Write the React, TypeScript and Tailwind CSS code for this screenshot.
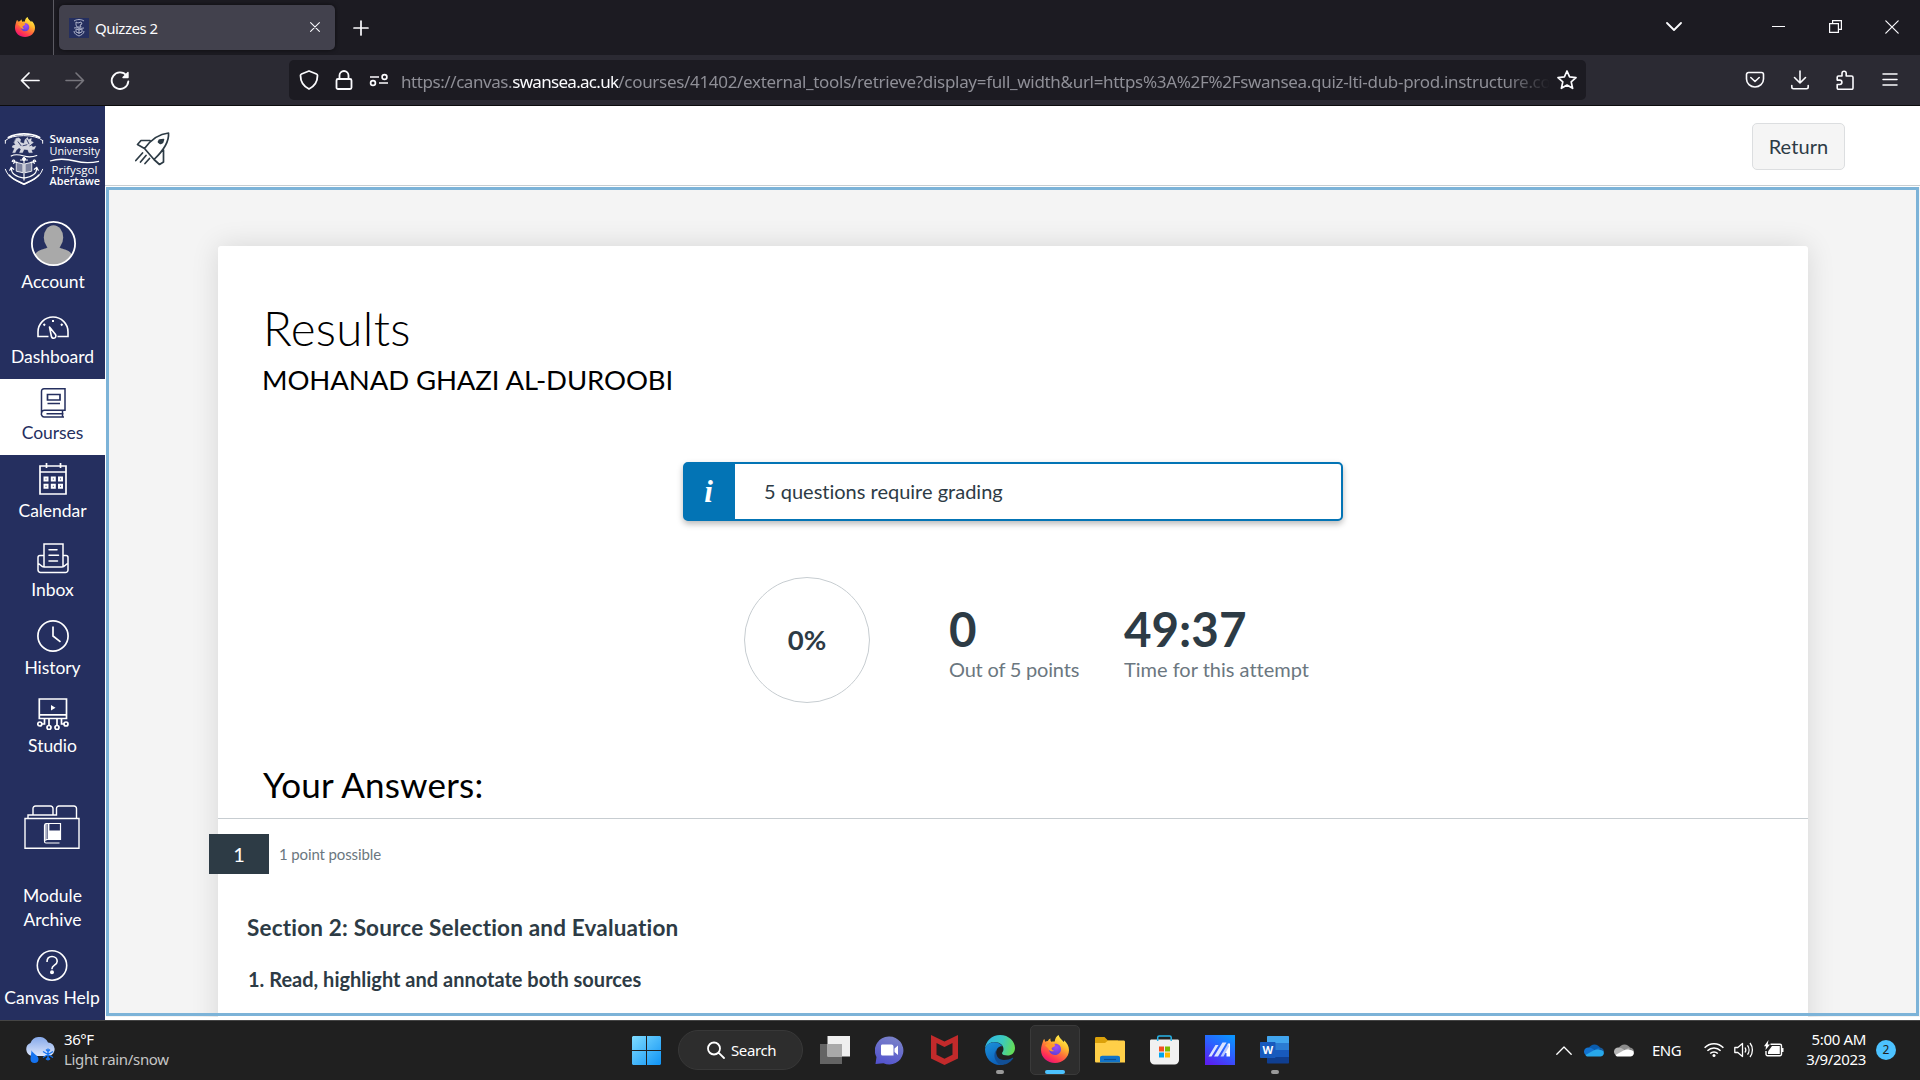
import React from "react";

const UI = "font-['Noto_Sans',sans-serif]";

function Firefox({ id, className }: { id: string; className: string }) {
  return (
    <svg viewBox="0 0 28 28" className={className}>
      <defs>
        <linearGradient id={id + "a"} x1="0.8" y1="0.05" x2="0.25" y2="1">
          <stop offset="0" stopColor="#fff44f" />
          <stop offset="0.3" stopColor="#ffbd2e" />
          <stop offset="0.55" stopColor="#ff7139" />
          <stop offset="0.8" stopColor="#ff3055" />
          <stop offset="1" stopColor="#e3107c" />
        </linearGradient>
        <radialGradient id={id + "b"} cx="0.6" cy="0.3" r="0.75">
          <stop offset="0" stopColor="#a04df5" />
          <stop offset="1" stopColor="#5b3fd6" />
        </radialGradient>
      </defs>
      <path
        d="M17.6 0c.6 3 3.400 4.600 5 7 .5-.3.600-1 .6-1.800C26 8 28 11 28 15c0 7.400-6.200 13-14 13S0 22.400 0 15c0-3.600 1.400-6.700 2.200-9.600.3-.7.8-1.200 1.200-1.300l.8 2.700C5 6.200 5.900 6 6.900 6c.7-1.300 1.700-2 2.600-2.400-.3 1.200 0 2.400.8 3.200 1.200-.4 2.300-.5 3.400-.3C13.900 3.600 15.600 1.200 17.600 0z"
        fill={`url(#${id}a)`}
      />
      <path d="M13.500 8.800c4-.6 6.500 2 6.500 5.400 0 3.200-2.600 5.800-6 5.800-3.500 0-5.800-2.500-5.800-5.200 0-1 .3-1.800.7-2.300 1 .5 2.300.3 3.400-.5l1.700-1.100c-.2-.8-.5-1.400-.5-2.100z" fill={`url(#${id}b)`} />
      <path d="M4 10.500c2-2.300 5-2.200 7.500-.9 1 .5 2 .5 2.900.5-.3 1.400-2.900 1.600-3.600 2.800-.5 1.100.3 2.600 2.500 2.800-2.200 1.500-5.300.2-6-2.200-.8-.9-2-2-3.300-3z" fill="#ff9a2b" />
    </svg>
  );
}

function Line({ d, className, w = 1.6, box = "0 0 20 20", fill = "none" }: { d: string; className: string; w?: number; box?: string; fill?: string }) {
  return (
    <svg viewBox={box} className={className} fill={fill} stroke="currentColor" strokeWidth={w} strokeLinecap="round" strokeLinejoin="round">
      <path d={d} />
    </svg>
  );
}

function Crest({ className }: { className: string }) {
  return (
    <svg viewBox="0 0 40 55" className={className} fill="none" stroke="#fff" strokeLinecap="round">
      <path d="M1.300 8.500C7 2 32 2 38.700 8.500" strokeWidth="1" />
      <path d="M4 5.500C13 .8 27 .8 36 5.500" strokeWidth="1.700" />
      <path d="M1 8.500v3M39 8.500v3M1 38c3 9 12 12 19 15.500C27 50 36 47 39 38" strokeWidth="1" />
      <path d="M5 44c4 4.500 10 6.500 15 9 5-2.500 11-4.500 15-9" strokeWidth="1.700" />
      <path d="M7 24.500c4-2.500 8-1.500 13 0s9 1 13-.5" strokeWidth="1.200" />
      <path d="M12 6.500l2.500-.5 2 1.500-.5 3 4 1.500 1-4 2.500-2.500 1 2.500 3-1.500-.5 3 2.500 1-2.500 2.500 2 2.500 3-1-1.500 3-3 .5 1 3h-3.500l-1-3-4-.5-1.500 3.500h-3l1.500-3.500-2-1.500-3 2.500-1 2.500H8.500l2-4.500-2.500-1 .5-1.500 3-1-1.500-2z" fill="#fff" fillOpacity="0.800" strokeWidth="0.400" />
      <path d="M14 10l3 4M23 8l2 4M19 14l4-1M26 14l2-1" stroke="#252f5f" strokeWidth="0.900" />
      <path d="M20 26v23M16.500 28.500h7M8 30l5 1M32 30l-5 1M7 37c0 6 6 9 13 10 7-1 13-4 13-10M5.500 39L7 36l2.500 2M34.500 39L33 36l-2.500 2M8 30c1-3 4-1 1.500 2M32 30c-1-3-4-1-1.500 2" strokeWidth="1.200" />
      <path d="M12.500 31l6.500 1.500v9L12.500 40zM27.500 31L21 32.500v9l6.500-1.500z" fill="#fff" fillOpacity="0.400" strokeWidth="0.900" />
      <circle cx="20" cy="27.500" r="1.500" fill="#fff" />
    </svg>
  );
}

const icons = {
  dashboard: (
    <svg viewBox="0 0 32 32" className="h-8 w-8" fill="none" stroke="currentColor" strokeWidth="1.600">
      <path d="M11.500 24.500H1V20a15 15 0 0 1 30 0v4.500H20.500" />
      <path d="M12.500 15l6 7.500c1 1.700 0 3.700-1.700 3.700-1.300 0-2.200-.7-2.500-2.200z" strokeLinejoin="round" />
      <path d="M16 8v2M6.500 12l1.500 1.500M25.500 12L24 13.500" strokeWidth="2" />
    </svg>
  ),
  courses: (
    <svg viewBox="0 0 32 32" className="h-8 w-8" fill="none" stroke="currentColor" strokeWidth="1.700">
      <path d="M7 1.800h21v21.500H7.500a3 3 0 0 0-3 3V4.500c0-1.700 1-2.700 2.500-2.700zM4.500 26a3 3 0 0 0 3 4H27M9.500 26.700h17M25.500 23.500v6" strokeWidth="1.500" />
      <path d="M10.500 7.500H23v5.500H10.500zM10.500 16.500H23" />
    </svg>
  ),
  calendar: (
    <svg viewBox="0 0 32 32" className="h-8 w-8" fill="none" stroke="currentColor" strokeWidth="1.700">
      <path d="M3 3h26v28H3zM3 9h26M9.500 0v5M23.500 0v5" />
      <path d="M7.500 14.500h3v3h-3zM14.800 14.500h3v3h-3zM22 14.500h3v3h-3zM7.500 21.800h3v3h-3zM14.800 21.800h3v3h-3zM22 21.800h3v3h-3z" strokeWidth="2" />
    </svg>
  ),
  inbox: (
    <svg viewBox="0 0 32 32" className="h-8 w-8" fill="none" stroke="currentColor" strokeWidth="1.500">
      <path d="M7 25V2h19v23M7 13.500H3a2 2 0 0 0-2 2V28a2.500 2.500 0 0 0 2.500 2.500h25A2.500 2.500 0 0 0 31 28V15.500a2 2 0 0 0-2-2h-3M1 21.500c2 0 3 3.500 6 3.500h18c3 0 4-3.500 6-3.500" />
      <path d="M12 7.700h8M12 13.300h9.500M12 19h8.500" strokeLinecap="round" />
    </svg>
  ),
  history: (
    <svg viewBox="0 0 32 32" className="h-8 w-8" fill="none" stroke="currentColor" strokeWidth="1.700">
      <circle cx="16" cy="16" r="15.100" />
      <path d="M16 6.500V16l7.500 5.800" />
    </svg>
  ),
  studio: (
    <svg viewBox="0 0 32 32" className="h-8 w-8" fill="none" stroke="currentColor" strokeWidth="1.700">
      <path d="M2.300 1h27.200v19.500H2.300zM2.300 16.800h27.200" />
      <path d="M14 7l4.500 2.700L14 12.500z" fill="currentColor" stroke="none" />
      <path d="M7.500 20.500V26H5M24.500 20.500V26H27M12 20.500V28M20 20.500V28" />
      <circle cx="2.800" cy="26" r="2" /><circle cx="29" cy="26" r="2" /><circle cx="12" cy="29.500" r="2" /><circle cx="20" cy="29.500" r="2" />
    </svg>
  ),
};

function NavItem({ icon, label, className }: { icon: React.ReactNode; label: string; className: string }) {
  return (
    <a className={"flex shrink-0 flex-col items-center " + className}>
      {icon}
      <span className="h-[22px] whitespace-nowrap text-[17.5px] leading-[22px] tracking-[-0.05px]">{label}</span>
    </a>
  );
}

function Sidebar() {
  return (
    <nav className="flex w-[105px] shrink-0 flex-col bg-[#252f5f] text-white">
      <div className="flex h-[115px] shrink-0 pt-[26px] pl-1">
        <Crest className="h-[54px] w-10" />
        <svg viewBox="0 0 58 55" className="h-[55px] w-[58px] overflow-visible font-['Open_Sans',sans-serif]" fill="#fff" fontSize="11.500">
          <text x="5.500" y="11" fontWeight="600" textLength="49.500" lengthAdjust="spacingAndGlyphs">Swansea</text>
          <text x="5.500" y="23" textLength="50.500" lengthAdjust="spacingAndGlyphs">University</text>
          <path d="M6 29c8-2.500 17-2 25 0s16 2 24 .3" stroke="#fff" strokeWidth="1.300" fill="none" />
          <text x="7.500" y="41.500" textLength="46" lengthAdjust="spacingAndGlyphs">Prifysgol</text>
          <text x="5.500" y="52.500" fontWeight="600" textLength="50.500" lengthAdjust="spacingAndGlyphs">Abertawe</text>
        </svg>
      </div>
      <NavItem
        className="h-[82px] gap-[5px] pl-px"
        label="Account"
        icon={
          <svg viewBox="0 0 45 45" className="h-[45px] w-[45px]">
            <defs><clipPath id="av"><circle cx="22.500" cy="22.500" r="21.500" /></clipPath></defs>
            <g clipPath="url(#av)" fill="#a9a9a9">
              <ellipse cx="22.500" cy="16.500" rx="9.700" ry="12.300" />
              <path d="M17 25h11c0 4 12 2 13 10v10H4V35c1-8 13-6 13-10z" />
            </g>
            <circle cx="22.500" cy="22.500" r="21.600" fill="none" stroke="#fff" strokeWidth="1.800" />
          </svg>
        }
      />
      <NavItem className="h-[76px] gap-[2px] pt-[9px]" icon={icons.dashboard} label="Dashboard" />
      <NavItem className="h-[76px] gap-[3px] bg-white pt-[8px] text-[#252f5f]" icon={icons.courses} label="Courses" />
      <NavItem className="h-[79px] gap-[5px] pt-[8px]" icon={icons.calendar} label="Calendar" />
      <NavItem className="h-[78px] gap-[5px] pt-[8px]" icon={icons.inbox} label="Inbox" />
      <NavItem className="h-[78px] gap-[5px] pt-[8px]" icon={icons.history} label="History" />
      <NavItem className="h-[78px] gap-[5px] pt-[8px]" icon={icons.studio} label="Studio" />
      <a className="flex h-[182px] shrink-0 flex-col items-center pt-[37px]">
        <svg viewBox="0 0 56 44" className="mr-[2px] h-11 w-14" fill="none" stroke="#fff" strokeWidth="1.400">
          <path d="M1 13.500h54V43.300H1zM4 13V10h5V3.500a2.500 2.500 0 0 1 2.500-2.500h15A2.500 2.500 0 0 1 29 3.500V10h3.500V3.500A2.500 2.500 0 0 1 35 1h15a2.500 2.500 0 0 1 2.500 2.500V13M9 10h24" />
          <path d="M22 18.500h14.500v16H22zM20.500 36V20.500c0-1 .5-2 1.500-2v16.500c-1.500 0-1.500.6-1.500 1.500s.5 1.500 1.500 1.500h13.500" strokeWidth="1.200" />
          <path d="M25 26h11v8H25z" fill="#fff" strokeWidth="1" /><path d="M24.500 19v15" strokeWidth="1.800" />
        </svg>
        <span className="mt-[35px] text-center text-[17.5px] leading-6">Module<br />Archive</span>
      </a>
      <NavItem
        className="h-[70px] gap-[5px] pr-px"
        label="Canvas Help"
        icon={
          <svg viewBox="0 0 32 32" className="h-8 w-8" fill="none" stroke="currentColor" strokeWidth="1.600">
            <circle cx="16" cy="15.500" r="14.700" />
            <path d="M11 12c0-3.500 2-5.500 5-5.500s5.200 2 5.200 4.700c0 4-5.200 3.800-5.200 7.300v.8" />
            <circle cx="16" cy="22.300" r="1.200" fill="currentColor" />
          </svg>
        }
      />
    </nav>
  );
}

function BrowserChrome() {
  return (
    <header className={"shrink-0 text-[#fbfbfe] " + UI}>
      <div className="flex h-[55px] bg-[#1c1b22]">
        <div className="flex w-[54px] items-center justify-center border-r border-[#5b5a62] pr-[3px] pb-px">
          <Firefox id="f1" className="h-5 w-5" />
        </div>
        <div className="mt-[5px] ml-[5px] flex h-[45px] w-[276px] items-center rounded-[5px] bg-[#42414d] pr-[15px] pl-[10px] shadow-[0_0_4px_rgba(0,0,0,.6)]">
          <svg viewBox="0 0 20 20" className="h-5 w-5">
            <path d="M0 0h20v20H0z" fill="#252f5f" />
            <path d="M5 3c3-2 7-2 10 0M7 4l2 1 3-1 1 2-2 1 1 2H8L7 7zM5 10c3-1 6 1 10 0M7 11l3 1 3-1v3l-3 1-3-1zM5 13c0 3 3 4 5 5 2-1 5-2 5-5M10 10v6" fill="none" stroke="#b9bdd2" strokeWidth="0.900" />
          </svg>
          <span className="ml-[6px] flex-1 text-[15px] leading-5 tracking-[-0.5px]">Quizzes 2</span>
          <Line className="mb-px h-[10px] w-[10px]" box="0 0 10 10" w={1.100} d="M.6.6l8.800 8.800M9.400.6L.6 9.400" />
        </div>
        <Line className="mt-[20px] ml-[18px] h-4 w-4" box="0 0 16 16" w={1.700} d="M8 1v14M1 8h14" />
        <div className="flex flex-1 justify-end pt-[20px] pr-[21px]">
          <Line className="mt-[2px] h-[9px] w-4" box="0 0 16 9" w={1.800} d="M1 1l7 7 7-7" />
          <Line className="ml-[90px] h-[13px] w-[13px]" box="0 0 13 13" w={1.200} d="M.5 6.500h12" />
          <svg viewBox="0 0 13 13" className="ml-[44px] h-[13px] w-[13px]" fill="none" stroke="currentColor" strokeWidth="1.200">
            <path d="M.6 3.600h8.800v8.800H.6zM3.600 3.600v-3h8.800v8.800h-3" />
          </svg>
          <Line className="ml-[43px] h-[14px] w-[14px]" box="0 0 14 14" w={1.200} d="M.8.8l12.400 12.400M13.200.8L.8 13.200" />
        </div>
      </div>
      <div className="flex h-[51px] items-center border-b border-[#0c0c0d] bg-[#2b2a33]">
        <Line className="ml-[20px] h-5 w-5" w={1.700} d="M19 10.500H1.500M9 3L1.500 10.500 9 18" />
        <Line className="ml-[25px] h-5 w-5 text-[#77767d]" w={1.600} d="M1 10.500h17.500M11 3l7.500 7.500L11 18" />
        <svg viewBox="0 0 20 20" className="ml-[25px] h-5 w-5" fill="none" stroke="currentColor" strokeWidth="1.900" strokeLinecap="round">
          <path d="M16.500 5.500A8.300 8.300 0 1 0 18.300 11.500" />
          <path d="M18 2.500v5h-5z" fill="currentColor" strokeWidth="1.400" strokeLinejoin="round" />
        </svg>
        <div className="ml-[159px] flex h-10 w-[1297px] items-center rounded-[5px] bg-[#1c1b22] pr-[9px] pl-[10px]">
          <Line className="h-5 w-5" w={1.800} d="M10 1l7.500 3c.8.300 1 .7 1 1.500 0 6-2.500 10.500-8.500 13.500-6-3-8.500-7.500-8.500-13.500 0-.8.200-1.200 1-1.500z" />
          <Line className="ml-[15px] h-5 w-5" w={1.800} d="M4 9h12a1.500 1.500 0 0 1 1.500 1.500v7A1.500 1.500 0 0 1 16 19H4a1.500 1.500 0 0 1-1.500-1.500v-7A1.500 1.500 0 0 1 4 9zM5.500 9V5.500a4.500 4.500 0 0 1 9 0V9" />
          <svg viewBox="0 0 20 20" className="ml-[15px] h-5 w-5" fill="none" stroke="currentColor" strokeWidth="1.700">
            <path d="M1 7h9M10 13h9" /><circle cx="15.500" cy="7" r="2.400" /><circle cx="4" cy="13" r="2.400" />
          </svg>
          <div className="mt-[3px] ml-[12px] w-[1149px] overflow-hidden whitespace-nowrap text-[17px] leading-6 tracking-[-0.31px] text-[#8f8f97] [mask-image:linear-gradient(to_right,black_96%,transparent)]">
            <span className="tracking-[-0.43px]">https://canvas.</span>
            <span className="tracking-[-0.7px] text-[#fbfbfe]">swansea.ac.uk</span>/courses/41402/external_tools/retrieve?display=full_width&amp;url=https%3A%2F%2Fswansea.quiz-lti-dub-prod.instructure.co
          </div>
          <Line className="ml-auto h-5 w-5" w={1.700} d="M10 1l2.600 5.900 6.400.7-4.800 4.300 1.400 6.400L10 15l-5.600 3.300 1.400-6.400L1 7.600l6.400-.7z" />
        </div>
        <div className="flex flex-1 justify-end gap-[25px] pr-[20px]">
          <Line className="h-5 w-5" w={1.600} d="M3.500 2.500h13A2 2 0 0 1 18.500 4.500V9a8.500 8 0 0 1-17 0V4.500a2 2 0 0 1 2-2zM5.800 7.500L10 11.500l4.200-4" />
          <Line className="h-5 w-5" w={1.600} d="M10 1v12M4.500 7.500L10 13l5.500-5.500M1.800 15.500v1.500c0 1 .7 1.700 1.700 1.700h13c1 0 1.700-.7 1.700-1.700v-1.500" />
          <Line className="h-5 w-5" w={1.600} d="M3.500 6H7V3.300a2 2 0 0 1 4.200 0V6h5.300a1.500 1.500 0 0 1 1.500 1.500V18a1.300 1.300 0 0 1-1.300 1.300H3.500A1.300 1.300 0 0 1 2.200 18v-3.500h2.500a2.200 2.200 0 0 0 0-4.400H2.200V7.300A1.300 1.300 0 0 1 3.500 6z" />
          <Line className="h-5 w-5" w={1.500} d="M3 4h14M3 9.500h14M3 15h14" />
        </div>
      </div>
    </header>
  );
}

function Results() {
  return (
    <div className="relative flex-1 overflow-hidden border-b-[3px] border-l border-white bg-[#f4f4f4] pt-[59px] pl-[112px] text-[#2d3b45] [font-variant-ligatures:none]">
      <div className="h-[800px] w-[1590px] rounded-t-[3px] bg-white pt-[53px] shadow-[0_0_28px_rgba(0,0,0,.12)]">
        <h1 className="ml-[45px] text-[47.5px] leading-[57px] font-light tracking-[0.35px] text-black">Results</h1>
        <h2 className="mt-[7px] ml-[44px] text-[27.5px] leading-[33px] tracking-[-0.1px] text-black">MOHANAD GHAZI AL-DUROOBI</h2>
        <div className="mx-auto mt-[66px] flex h-[59px] w-[660px] rounded-[5px] border-2 border-[#0374b5] bg-white shadow-[0_3px_6px_rgba(0,0,0,.28)]">
          <div className="flex w-[50px] items-center justify-center bg-[#0374b5] pr-[3px] font-['Liberation_Serif',serif] text-[31px] leading-none font-bold text-white italic">i</div>
          <p className="pt-[15px] pl-[29px] text-[20px] leading-6">5 questions require grading</p>
        </div>
        <div className="mt-[56px] flex pl-[526px]">
          <div className="flex h-[126px] w-[126px] items-center justify-center rounded-full border border-[#c7cdd1] pb-px text-[27.5px] font-bold">0%</div>
          <div className="ml-[79px] w-[176px] pt-[23px]">
            <div className="text-[47.5px] leading-[57px] font-bold">0</div>
            <div className="text-[20px] leading-6 tracking-[-0.2px] text-[#6b7780]">Out of 5 points</div>
          </div>
          <div className="pt-[23px]">
            <div className="-ml-px text-[47.5px] leading-[57px] font-bold">49:37</div>
            <div className="-ml-px text-[20px] leading-6 text-[#6b7780]">Time for this attempt</div>
          </div>
        </div>
        <h2 className="mt-[60px] h-[56px] border-b border-[#c7cdd1] pl-[45px] text-[35px] leading-[42px] tracking-[0.2px] text-black">Your Answers:</h2>
        <div className="mt-[15px] -ml-[9px] flex h-10 items-center">
          <div className="flex h-10 w-[60px] items-center justify-center bg-[#2d3b45] text-[20px] text-white">1</div>
          <span className="ml-[10px] text-[15px] tracking-[-0.12px] text-[#6b7780]">1 point possible</span>
        </div>
        <h3 className="mt-[40px] ml-[29px] text-[22.5px] leading-[27px] font-bold tracking-[0.18px]">Section 2: Source Selection and Evaluation</h3>
        <p className="mt-[26px] ml-[30px] text-[20px] leading-6 font-bold">1. Read, highlight and annotate both sources</p>
      </div>
      <div className="pointer-events-none absolute top-0 right-px bottom-px left-0 border-[3px] border-[#7cb3d8]" />
    </div>
  );
}

function Cell({ children, dot }: { children: React.ReactNode; dot?: boolean }) {
  return (
    <div className="relative flex h-[60px] w-[55px] shrink-0 items-center justify-center">
      {children}
      {dot && <span className="absolute bottom-[6px] left-[24px] h-1 w-2 rounded-full bg-[#9a9a9a]" />}
    </div>
  );
}

function Cloud({ a, b, c }: { a: string; b: string; c: string }) {
  return (
    <svg viewBox="0 0 20 14" className="h-[14px] w-5">
      <path d="M5 5a6 6 0 0 1 11 0l-4 4z" fill={a} />
      <path d="M4 13a4.200 4.200 0 0 1 .5-8.500c1.500-.2 3 .3 4.500 1.500l5 4z" fill={b} />
      <path d="M9 8l5-3a4.200 4.200 0 0 1 6 4l-4 2z" fill={b} opacity="0.700" />
      <path d="M1.500 12l8-4.500c3-1.500 6-1.500 9.500.5a3.300 3.300 0 0 1-2.500 5.500H4c-1 0-2-.5-2.500-1.500z" fill={c} />
    </svg>
  );
}

function Taskbar() {
  return (
    <footer className={"flex h-[60px] shrink-0 items-center bg-[#202020] text-white shadow-[inset_0_1px_0_#454545] " + UI}>
      <div className="flex w-[619px] items-center pl-[25px]">
        <svg viewBox="0 0 30 26" className="h-[26px] w-[30px]">
          <defs><linearGradient id="wc" x1="0" y1="0" x2="0" y2="1"><stop offset="0" stopColor="#86a9ea" /><stop offset="1" stopColor="#dbe5fb" /></linearGradient></defs>
          <path d="M7 19a6.800 6.800 0 0 1-1.500-13A9.500 9.500 0 0 1 23 5.500 6.800 6.800 0 0 1 24 19z" fill="url(#wc)" />
          <path d="M6.500 13c0 3 7 5 7 9a4 4 0 0 1-8 0c0-3 1-6 1-9z" fill="#1573f0" />
          <path d="M23 11.500v12M18 14.500l10 6M28 14.500l-10 6M21 12.500l2 2 2-2M21 22.500l2-2 2 2" stroke="#1573f0" strokeWidth="1.300" fill="none" />
        </svg>
        <div className="mb-[2px] ml-[9px] text-[15px] leading-5">
          <div className="tracking-[-0.45px]">36°F</div>
          <div className="tracking-[-0.32px] text-[#c6c6c6]">Light rain/snow</div>
        </div>
      </div>
      <Cell>
        <svg viewBox="0 0 29 29" className="h-[29px] w-[29px]">
          <defs><linearGradient id="wi" x1="0" y1="0" x2="1" y2="1"><stop offset="0" stopColor="#7fdcff" /><stop offset="1" stopColor="#0f93f5" /></linearGradient></defs>
          <path d="M1 0h13v14H0V1zM15 0h13l1 1v13H15zM0 15h14v14H1l-1-1zM15 15h14v13l-1 1H15z" fill="url(#wi)" />
        </svg>
      </Cell>
      <div className="mx-1 flex h-10 w-[125px] shrink-0 items-center rounded-full border border-[#383838] bg-[#2d2d2d] pl-[28px]">
        <Line className="h-[18px] w-[18px]" box="0 0 18 18" w={1.800} d="M13 7.500a6 6 0 1 1-12 0 6 6 0 0 1 12 0zM11.800 11.800L17 17" />
        <span className="ml-[6px] text-[15px] leading-5 tracking-[-0.4px]">Search</span>
      </div>
      <Cell>
        <svg viewBox="0 0 30 28" className="h-7 w-[30px]">
          <path d="M0 8h22v20H0z" fill="#646464" /><path d="M7.500 0H30v20.500H7.500z" fill="#efefef" /><path d="M7.500 8H22v12.500H7.500z" fill="#a9a9a9" />
        </svg>
      </Cell>
      <Cell>
        <svg viewBox="0 0 29 29" className="h-[29px] w-[29px]">
          <defs><linearGradient id="ch" x1="0.700" y1="0" x2="0.300" y2="1"><stop offset="0" stopColor="#7b83c9" /><stop offset="1" stopColor="#5353ce" /></linearGradient></defs>
          <path d="M14.500.500a14 14 0 1 1-6 26.700L.5 28l1-7A14 14 0 0 1 14.500.5z" fill="url(#ch)" />
          <path d="M7.500 8.500h9a2 2 0 0 1 2 2v9h-11a1.500 1.500 0 0 1-1.500-1.500v-8c0-1 .5-1.500 1.500-1.500zM19.500 12.500l3.500-3v9.500l-3.500-3z" fill="#fff" />
        </svg>
      </Cell>
      <Cell>
        <svg viewBox="0 0 27 30" className="h-[30px] w-[27px]"><path d="M0 0l13.500 6.500L27 0v23.500L13.500 30 0 23.500zM5.500 8v11.700l8 4 8-4V8l-8 4z" fill="#c22a2b" fillRule="evenodd" /></svg>
      </Cell>
      <Cell dot>
        <svg viewBox="0 0 30 30" className="h-[30px] w-[30px]">
          <defs>
            <linearGradient id="e1" x1="0" y1="0.300" x2="1" y2="0.500"><stop offset="0" stopColor="#2fb6e6" /><stop offset="0.550" stopColor="#3bc9c0" /><stop offset="1" stopColor="#65dd55" /></linearGradient>
            <linearGradient id="e2" x1="0" y1="0" x2="0.500" y2="1"><stop offset="0" stopColor="#1b93dc" /><stop offset="1" stopColor="#0c5fb8" /></linearGradient>
          </defs>
          <path d="M0 14C.5 6 7 0 15 0c9 0 15 6.500 15 13 0 5-3.500 7.500-7.500 7.500-3 0-5.500-1-5.500-2.300 0-.8 1.500-1.500 1.500-4.200 0-4-4-7-9-7C5 7 1 10 0 14z" fill="url(#e1)" />
          <path d="M0 14c1-4 5-6.700 9.500-6.700 4 0 6.500 1.700 7.800 4-2.500-.8-6.300 2-6.300 6.700 0 6 5 10.500 10 10-2 1.300-4 2-6 2C6.500 30 0 23 0 14z" fill="url(#e2)" />
          <path d="M11.500 14.500C10 21 14 25 19 25c3.500 0 6-1 8.500-2.300.5-.2 1 .3.600.8C25 28 20.500 30 15.500 30 9.500 27 7.500 19.500 11.500 14.500z" fill="#124f95" />
        </svg>
      </Cell>
      <div className="relative mx-[2.500px] flex h-[50px] w-[50px] shrink-0 items-center justify-center rounded-[5px] border border-[#3a3a3a] bg-[#2d2d2d]">
        <Firefox id="f2" className="mb-[2px] h-7 w-7" />
        <span className="absolute bottom-0 left-[14px] h-1 w-5 rounded-full bg-[#4cc2ff]" />
      </div>
      <Cell>
        <svg viewBox="0 0 30 27" className="h-[27px] w-[30px]">
          <path d="M0 1.500C0 .5.500 0 1.500 0h8L13 3.500h10V9H0z" fill="#dba10a" />
          <path d="M0 6h10l3-2.500h15.500c1 0 1.500.5 1.500 1.500v20.500H1.500C.5 25.500 0 25 0 24z" fill="#ffcf48" />
          <path d="M5 25.500V21c0-1.500.8-2.300 2.300-2.300h15.400c1.500 0 2.300.8 2.300 2.300v4.500z" fill="#1274c8" /><path d="M9 22.500h12" stroke="#0b4f92" strokeWidth="1.200" />
        </svg>
      </Cell>
      <Cell>
        <svg viewBox="0 0 29 30" className="h-[30px] w-[29px]">
          <path d="M0 6c0-1 .5-1.500 1.500-1.500h26c1 0 1.500.5 1.500 1.500v19a4.500 4.500 0 0 1-4.500 4.500h-20A4.500 4.500 0 0 1 0 25z" fill="#f1f1f1" />
          <path d="M7.700 6V2.500c0-1 .5-1.500 1.500-1.500h10.500c1 0 1.500.5 1.500 1.500V6" fill="none" stroke="#27b4e8" strokeWidth="1.500" />
          <path d="M9 11.500h5v5H9z" fill="#f25022" /><path d="M15 11.500h5v5h-5z" fill="#7fba00" /><path d="M9 17.500h5v5H9z" fill="#00a4ef" /><path d="M15 17.500h5v5h-5z" fill="#ffb900" />
        </svg>
      </Cell>
      <Cell>
        <svg viewBox="0 0 30 30" className="h-[30px] w-[30px]">
          <defs><linearGradient id="my" x1="0.800" y1="0" x2="0.200" y2="1"><stop offset="0" stopColor="#0c93ff" /><stop offset="0.500" stopColor="#2f5cff" /><stop offset="1" stopColor="#5a1ff0" /></linearGradient></defs>
          <path d="M0 0h30v30H0z" fill="url(#my)" />
          <path d="M3.500 21.500L10.500 10h3l-7 11.500zM9 21.500L17.500 7.500h4L13 21.500z" fill="#dbe3ff" />
          <path d="M23 8.500h2v13h-3.500V18h-3l2-3.500h1z" fill="#fff" />
          <path d="M15.500 21.500L23 8.500l1 3-5.500 10z" fill="#b9c8ff" />
        </svg>
      </Cell>
      <Cell dot>
        <svg viewBox="0 0 29 28" className="h-7 w-[29px]">
          <path d="M7 1c0-.6.4-1 1-1h20c.6 0 1 .4 1 1v6H7z" fill="#41a5ee" /><path d="M7 7h22v7H7z" fill="#2b7cd3" /><path d="M7 14h22v7H7z" fill="#185abd" /><path d="M7 21h22v5.500c0 .600-.4 1-1 1H8c-.6 0-1-.4-1-1z" fill="#103f91" />
          <path d="M1 6h13.500c.6 0 1 .4 1 1v14c0 .6-.4 1-1 1H1c-.6 0-1-.4-1-1V7c0-.6.4-1 1-1z" fill="#185abd" />
          <text x="7.700" y="17.700" textAnchor="middle" fontSize="11" fontWeight="700" fill="#fff">W</text>
        </svg>
      </Cell>
      <div className="flex flex-1 items-center justify-end pr-[24px]">
        <Line className="h-[9px] w-4" box="0 0 16 9" w={1.300} d="M.8 8.200L8 1l7.200 7.200" />
        <div className="mb-px ml-[12px] flex gap-[10px]">
          <Cloud a="#0a5cad" b="#1272cf" c="#28a8ea" />
          <Cloud a="#8b8b8b" b="#b5b5b5" c="#fff" />
        </div>
        <span className="mr-[22px] mb-px ml-[18px] w-[30px] text-[15px] leading-5 tracking-[-0.5px]">ENG</span>
        <svg viewBox="0 0 20 16" className="mb-px h-4 w-5" fill="none" stroke="#fff" strokeWidth="1.500">
          <path d="M.6 5.800a13 13 0 0 1 18.800 0M3.400 8.700a9.200 9.200 0 0 1 13.200 0M6.200 11.500a5.300 5.300 0 0 1 7.600 0" /><circle cx="10" cy="13.500" r="1.500" fill="#fff" stroke="none" />
        </svg>
        <svg viewBox="0 0 20 18" className="ml-[10px] h-[18px] w-5" fill="none" stroke="#fff" strokeWidth="1.300" strokeLinejoin="round">
          <path d="M.8 6.500h3L8.500 2.500v13L3.800 11.500h-3zM11 6.500c1 1.500 1 3.500 0 5M13.500 4.300c2 2.700 2 6.700 0 9.400M16 2c3.200 4 3.200 10 0 14" />
        </svg>
        <svg viewBox="0 0 20 18" className="mb-[2px] ml-[10px] h-[18px] w-5" fill="none" stroke="#fff" strokeWidth="1.400">
          <path d="M6.500 4.200H16a1.500 1.500 0 0 1 1.500 1.500v8.600a1.500 1.500 0 0 1-1.500 1.500H3.500A1.500 1.500 0 0 1 2 14.300V11" /><path d="M8 6h7.800v8H4v-2.500z" fill="#fff" stroke="none" /><path d="M18.500 8v4" strokeWidth="2" />
          <path d="M4.500 0L0 6.200h2L1.500 10 6 4.500H3.700z" fill="#fff" stroke="none" />
        </svg>
        <div className="mb-[2px] w-[82px] text-right text-[15px] leading-5 tracking-[-0.35px]">5:00 AM<br />3/9/2023</div>
        <span className="ml-[10px] flex h-5 w-5 items-center justify-center rounded-full bg-[#4cc2ff] text-[12px] text-[#202020]">2</span>
      </div>
    </footer>
  );
}

export default function App() {
  return (
    <div className="flex h-[1080px] w-[1920px] flex-col overflow-hidden bg-white font-['Lato',sans-serif]">
      <BrowserChrome />
      <div className="flex h-[914px] shrink-0">
        <Sidebar />
        <main className="flex flex-1 flex-col">
          <div className="mb-px flex h-[80px] shrink-0 items-start justify-between border-b border-[#c7cdd1] pr-[75px] pl-[30px]">
            <svg viewBox="0 0 36 36" className="mt-[25px] h-9 w-9" fill="none" stroke="#2d3b45" strokeWidth="1.700" strokeLinejoin="round" strokeLinecap="round">
              <path d="M9.500 17.500C15 10 22 3 33.500 2c.8 9-4.500 17-14.500 26.500zM15 9.500H6L2.500 13.500l7 4M28.500 19v12L24.500 33.500 19 28.500" />
              <path d="M28.500 8.500l-1 3-2 1-2-1.500 1-2z" fill="#2d3b45" />
              <path d="M7.500 22L.8 29.500M11 24.500L5.500 31M14.500 27.500l-4.500 5" />
            </svg>
            <button className="mt-[17px] h-[47px] w-[93px] rounded-[5px] border border-[#dcdee0] bg-[#f5f5f5] pb-[2px] text-[20px] tracking-[0.1px] text-[#2d3b45]">Return</button>
          </div>
          <Results />
        </main>
      </div>
      <Taskbar />
    </div>
  );
}
